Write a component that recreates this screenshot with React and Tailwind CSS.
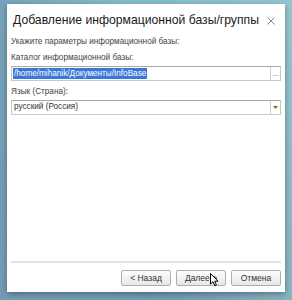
import React from 'react';

const font = { fontFamily: '"Liberation Sans", Arial, sans-serif' };

function Button({ children }) {
  return (
    <button className="flex h-[16px] w-[50px] items-center justify-center rounded-[2px] border border-[#adadad] bg-gradient-to-b from-[#fdfdfd] to-[#e8e8e8] text-[8.5px] leading-none text-[#333]">
      {children}
    </button>
  );
}

export default function App() {
  return (
    <div
      className="relative h-[300px] w-[292px] overflow-hidden bg-gradient-to-br from-[#8fc9d6] via-[#7fb2c8] to-[#5f86a3]"
      style={font}
    >
      <div className="absolute inset-0 bg-gradient-to-r from-[#6d92ad]/70 via-transparent to-[#a4d6d8]/60" />
      <div className="absolute left-[7px] top-[4px] flex h-[288px] w-[278px] flex-col bg-white shadow-[0_2px_6px_rgba(0,0,0,0.35)]">
        {/* Title */}
        <div className="flex h-[31px] items-center justify-between pl-[6px] pr-[10px] pt-[2px]">
          <span className="whitespace-nowrap text-[12.2px] text-[#1a1a1a]">Добавление информационной базы/группы</span>
          <svg width="8" height="8" viewBox="0 0 8 8" className="mt-[1px]">
            <path d="M0.5 0.5L7.5 7.5M7.5 0.5L0.5 7.5" stroke="#8a8a8a" strokeWidth="1" />
          </svg>
        </div>

        <div className="flex flex-1 flex-col px-[4px]">
          <p className="mt-[2px] text-[8.2px] leading-[10px] text-[#444]">Укажите параметры информационной базы:</p>
          <p className="mt-[6px] text-[8.2px] leading-[10px] text-[#444]">Каталог информационной базы:</p>

          {/* Path input */}
          <div className="mt-[3px] flex h-[15px] items-stretch border border-[#c8c8c8] border-t-[#a9a9a9]">
            <div className="flex flex-1 items-center pl-[1px]">
              <span className="bg-[#3a78d8] px-[1px] text-[8.2px] leading-[11px] text-white">/home/mihanik/Документы/InfoBase</span>
            </div>
            <div className="flex w-[10px] items-center justify-center border-l border-[#d0d0d0] text-[7px] leading-none text-[#555]">...</div>
          </div>

          <p className="mt-[6px] text-[8.2px] leading-[10px] text-[#444]">Язык (Страна):</p>

          {/* Language select */}
          <div className="mt-[3px] flex h-[15px] items-stretch border border-[#c8c8c8] border-t-[#a9a9a9]">
            <div className="flex flex-1 items-center pl-[2px] text-[8.2px] text-[#333]">русский (Россия)</div>
            <div className="flex w-[10px] items-center justify-center border-l border-[#d0d0d0]">
              <svg width="5" height="3" viewBox="0 0 5 3">
                <path d="M0 0H5L2.5 3Z" fill="#8a6a10" />
              </svg>
            </div>
          </div>

          <div className="flex-1" />

          {/* Footer */}
          <div className="h-[2px] bg-[#e2e2e2]" />
          <div className="flex h-[29px] items-start justify-end gap-[5px] pt-[7px]">
            <Button>&lt; Назад</Button>
            <div className="relative flex">
              <Button>Далее &gt;</Button>
              <svg width="9" height="14" viewBox="0 0 9 14" className="absolute left-[34px] top-[3px]">
                <path d="M0.5 0.5V11L3 8.7L4.8 12.8L6.4 12.1L4.7 8.2H8Z" fill="white" stroke="black" strokeWidth="1" strokeLinejoin="round" />
              </svg>
            </div>
            <Button>Отмена</Button>
          </div>
        </div>
      </div>
    </div>
  );
}
